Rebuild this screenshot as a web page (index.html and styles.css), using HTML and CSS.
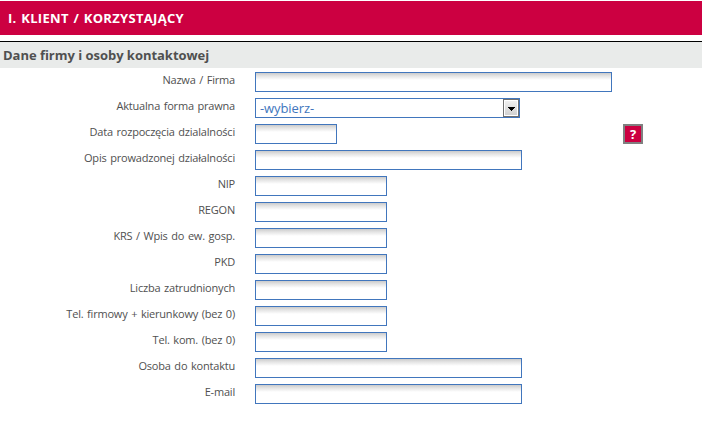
FILE: index.html
```html
<!DOCTYPE html>
<html lang="pl">

<head>
  <meta charset="UTF-8">
  <title>Klient / Korzystający</title>
  <link rel="stylesheet" href="styles.css">
</head>

<body>
  <h1 class="form-title">I. KLIENT / KORZYSTAJĄCY</h1>
  <h2 class="section-title">Dane firmy i osoby kontaktowej</h2>

  <form class="client-form">
    <div class="row">
      <label for="nazwa">Nazwa / Firma</label>
      <input type="text" id="nazwa" class="field wide">
    </div>
    <div class="row">
      <label>Aktualna forma prawna</label>
      <div class="select">
        <span class="select-value">-wybierz-</span>
        <span class="select-arrow">
          <svg width="7" height="4" viewBox="0 0 7 4" shape-rendering="crispEdges"><path d="M0 0h7v1H6v1H5v1H4v1H3V3H2V2H1V1H0z"/></svg>
        </span>
      </div>
    </div>
    <div class="row">
      <label for="data">Data rozpoczęcia dzialalności</label>
      <input type="text" id="data" class="field date">
      <button type="button" class="help">?</button>
    </div>
    <div class="row">
      <label for="opis">Opis prowadzonej działalności</label>
      <input type="text" id="opis" class="field medium">
    </div>
    <div class="row">
      <label for="nip">NIP</label>
      <input type="text" id="nip" class="field">
    </div>
    <div class="row">
      <label for="regon">REGON</label>
      <input type="text" id="regon" class="field">
    </div>
    <div class="row">
      <label for="krs">KRS / Wpis do ew. gosp.</label>
      <input type="text" id="krs" class="field">
    </div>
    <div class="row">
      <label for="pkd">PKD</label>
      <input type="text" id="pkd" class="field">
    </div>
    <div class="row">
      <label for="liczba">Liczba zatrudnionych</label>
      <input type="text" id="liczba" class="field">
    </div>
    <div class="row">
      <label for="tel">Tel. firmowy + kierunkowy (bez 0)</label>
      <input type="text" id="tel" class="field">
    </div>
    <div class="row">
      <label for="kom">Tel. kom. (bez 0)</label>
      <input type="text" id="kom" class="field">
    </div>
    <div class="row">
      <label for="osoba">Osoba do kontaktu</label>
      <input type="text" id="osoba" class="field medium">
    </div>
    <div class="row">
      <label for="email">E-mail</label>
      <input type="text" id="email" class="field medium">
    </div>
  </form>
</body>

</html>
```
FILE: styles.css
```css
* {
  box-sizing: border-box;
  margin: 0;
  padding: 0;
}

body {
  padding-top: 1px;
  background: #fff;
  color: #505050;
  font-family: "Trebuchet MS", "Open Sans", sans-serif;
  font-size: 11px;
  overflow: hidden;
}

/* headers */
.form-title {
  height: 34px;
  padding-left: 8px;
  background: #cc0041;
  color: #fff;
  font-size: 13px;
  font-weight: bold;
  line-height: 34px;
  letter-spacing: 0.3px;
  word-spacing: 1px;
}

.section-title {
  height: 27px;
  margin-top: 6px;
  padding-left: 3px;
  border-top: 1px solid #000;
  background: #e9ebea;
  font-size: 13px;
  line-height: 26px;
  letter-spacing: -0.03px;
}

/* form rows */
.client-form {
  padding-top: 4px;
}

.row {
  display: flex;
  height: 20px;
  margin-bottom: 6px;
}

.row label {
  width: 235px;
  margin-right: 20px;
  line-height: 16px;
  letter-spacing: -0.2px;
  word-spacing: 1px;
  text-align: right;
  white-space: nowrap;
}

.field {
  width: 132px;
  height: 20px;
  border: 1px solid #4176bd;
  background: linear-gradient(#cbcbcb, #e4e4e4 3px, #fff 7px);
  outline: none;
}

.field.wide {
  width: 357px;
}

.field.medium {
  width: 267px;
}

.field.date {
  width: 82px;
}

.select {
  display: flex;
  justify-content: space-between;
  width: 265px;
  height: 20px;
  padding-left: 4px;
  border: 1px solid #4176bd;
  color: #4176bd;
  font-size: 13px;
  line-height: 18px;
  letter-spacing: -0.1px;
}

.select-arrow {
  display: flex;
  align-items: center;
  justify-content: center;
  width: 16px;
  height: 18px;
  padding-top: 2px;
  border: 1px solid #707070;
  background: linear-gradient(#f2f2f2, #cfcfcf);
  box-shadow: inset 0 0 0 1px #fff;
}

.help {
  width: 20px;
  height: 20px;
  margin-left: 286px;
  border: 2px solid #808080;
  background: #cc0041;
  color: #fff;
  font: bold 13px/16px "Trebuchet MS", "Open Sans", sans-serif;
}
```
